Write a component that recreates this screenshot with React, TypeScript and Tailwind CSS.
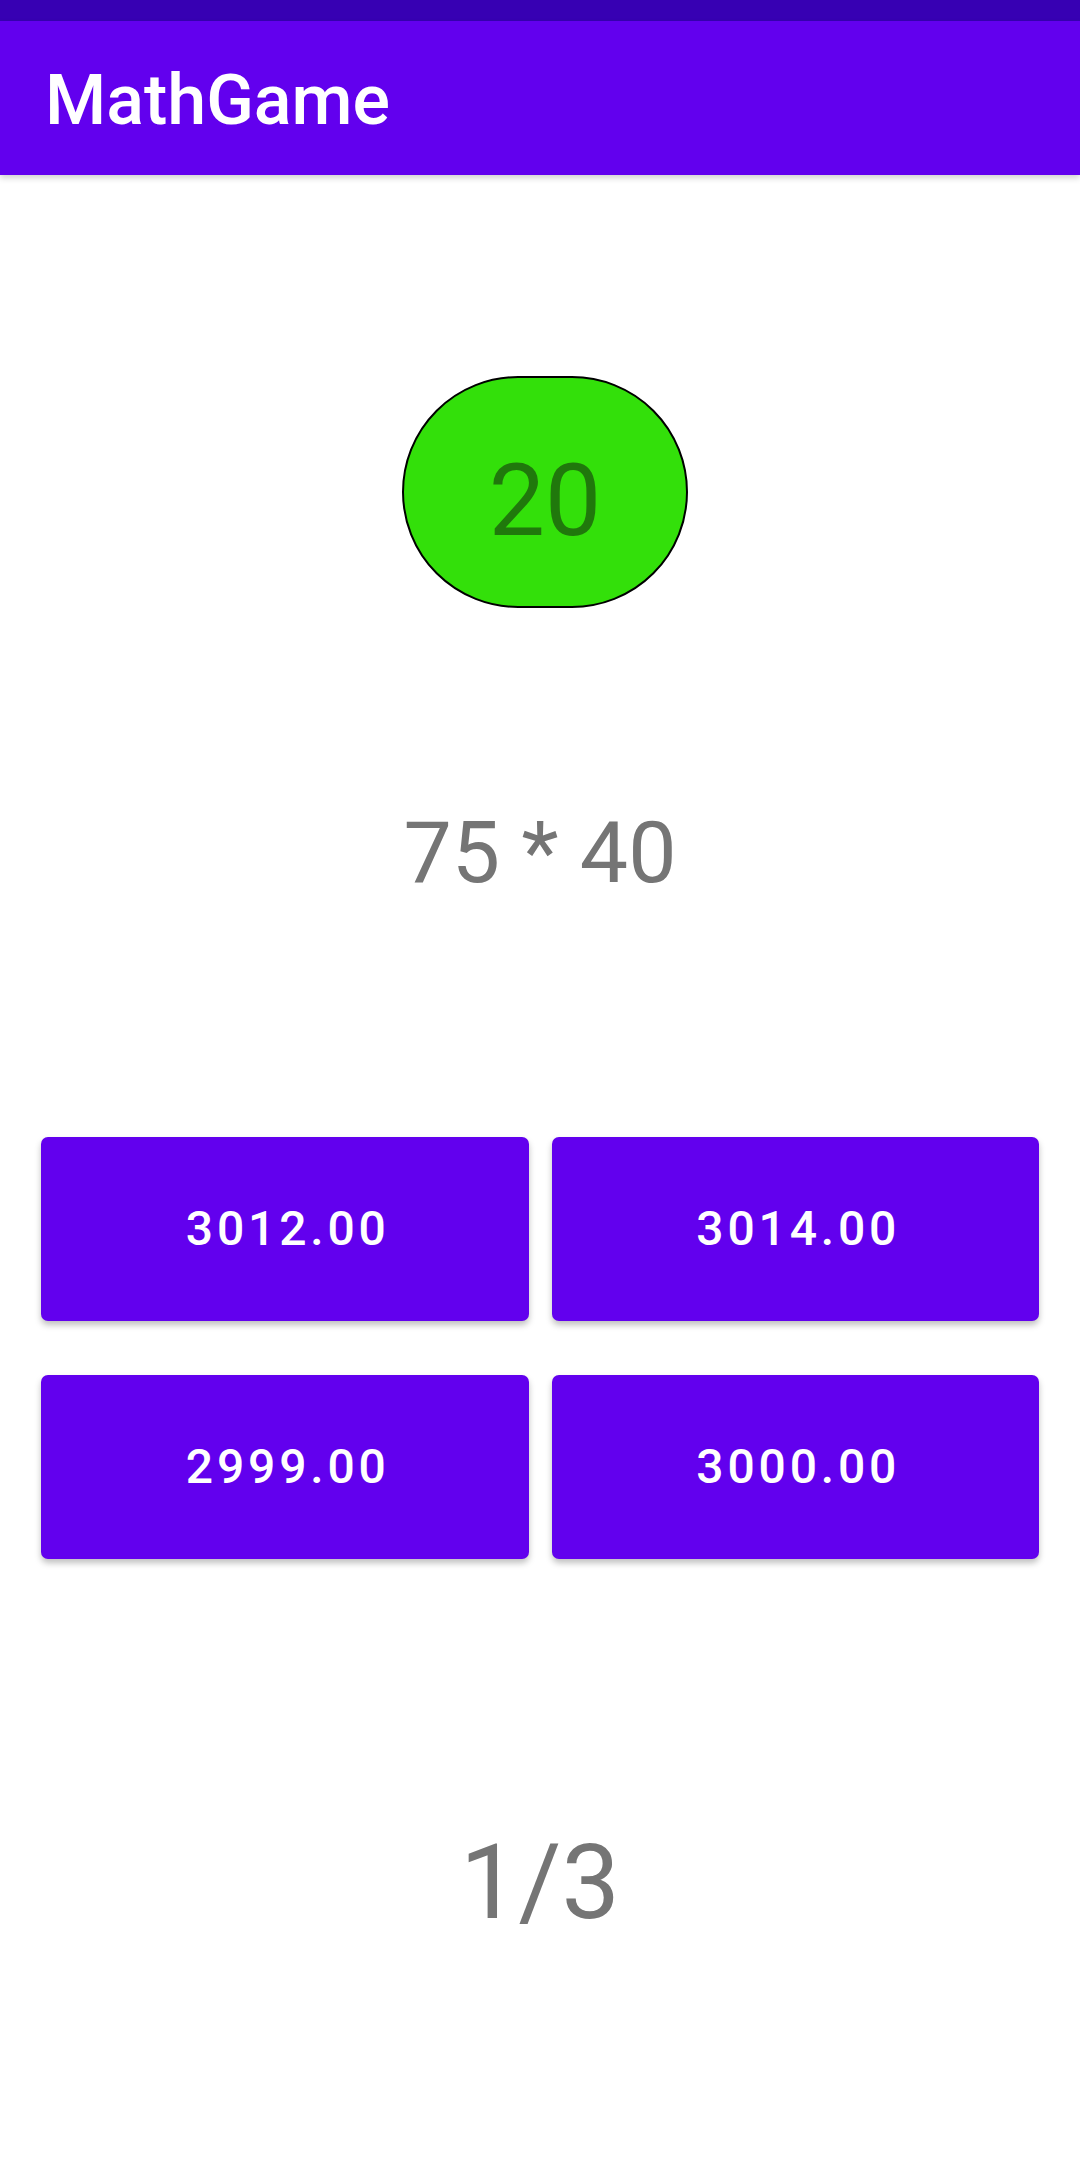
import React from "react";

const answers = ["3012.00", "3014.00", "2999.00", "3000.00"];

export default function App() {
  return (
    <div className="min-h-[2173px] w-[1080px] bg-white font-['Roboto',sans-serif]">
      {/* status bar */}
      <div className="h-[21px] bg-[#3700b3]" />

      {/* app bar */}
      <header className="flex h-[154px] items-center bg-[#6200ee] px-[45px] pt-[4px] shadow-[0_3px_6px_rgba(0,0,0,0.18)]">
        <h1 className="text-[70px] font-medium leading-none text-white">MathGame</h1>
      </header>

      <main className="flex flex-col items-center">
        {/* timer */}
        <div className="mt-[201px] flex w-full justify-center pl-[10px]">
          <div className="flex h-[232px] w-[286px] items-center justify-center rounded-full border-2 border-black bg-[#33e00a] pt-[18px]">
            <span className="text-[100px] leading-none text-[#20780c]">20</span>
          </div>
        </div>

        {/* question */}
        <div className="mt-[202px] text-[86px] leading-none text-[#757575]">75 * 40</div>

        {/* answers */}
        <div className="mt-[241px] grid w-full grid-cols-2 gap-x-[23px] gap-y-[54px] px-[41px]">
          {answers.map((a) => (
            <button
              key={a}
              className="flex h-[184px] items-center justify-center rounded-[7px] bg-[#6200ee] pl-[6px] text-[48px] font-medium leading-none tracking-[0.08em] text-white shadow-[0_4px_6px_rgba(0,0,0,0.25)]"
            >
              {a}
            </button>
          ))}
        </div>

        {/* progress */}
        <div className="mt-[272px] text-[104px] leading-none text-[#757575]">1/3</div>
      </main>
    </div>
  );
}
